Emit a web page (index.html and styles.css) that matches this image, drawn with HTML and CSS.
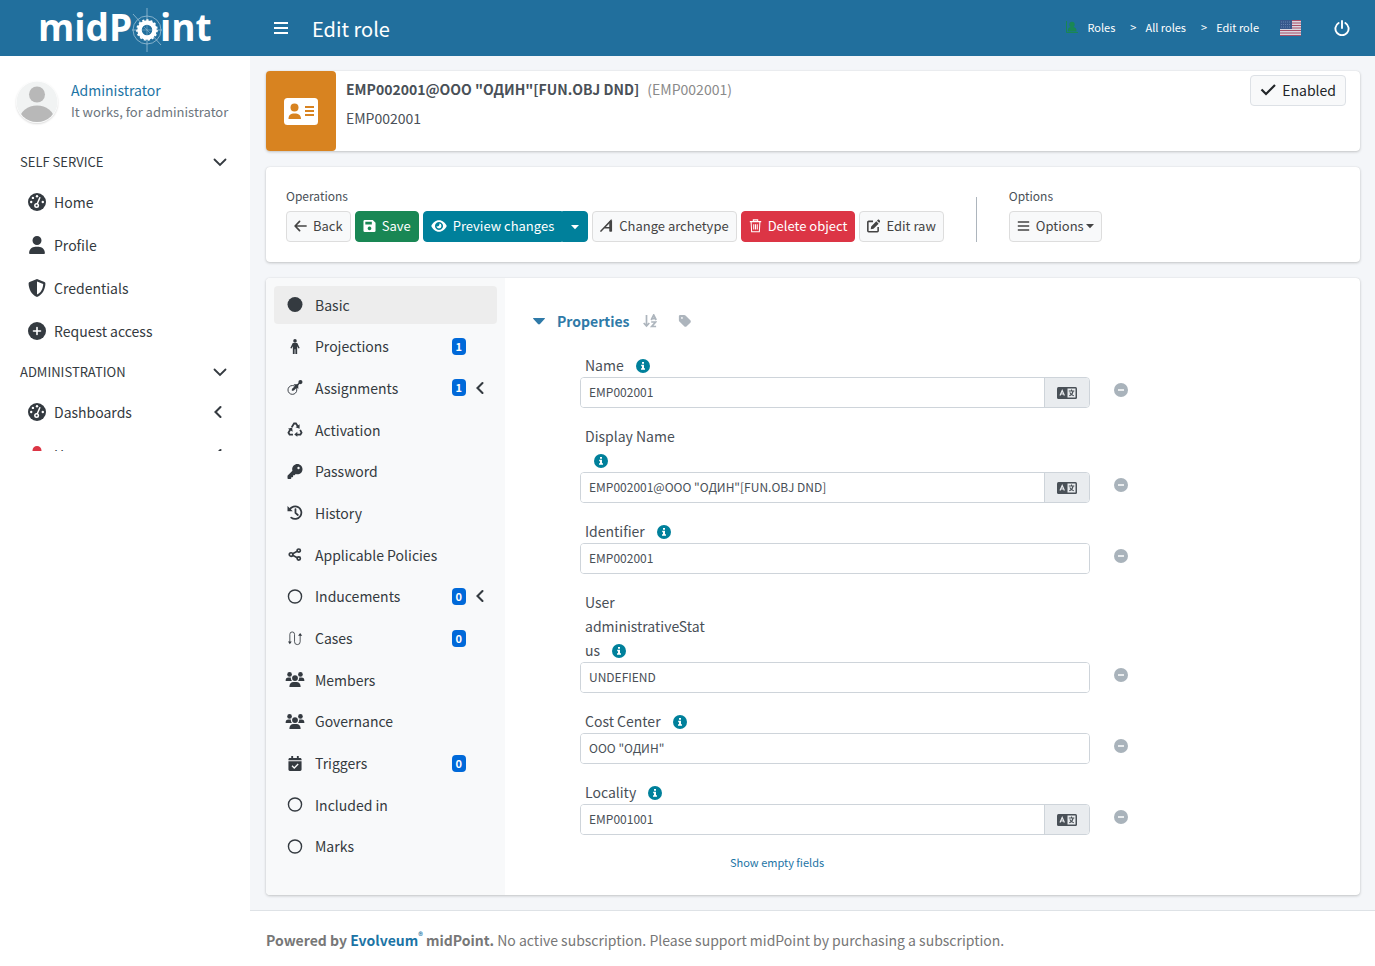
FILE: index.html
```html
<!DOCTYPE html>
<html lang="en">
<head>
<meta charset="utf-8">
<title>Edit role</title>
<link rel="stylesheet" href="styles.css">
</head>
<body>
<svg class="sprite" aria-hidden="true">
  <symbol id="bars" viewBox="0 0 16 16"><path d="M1 3h14M1 8h14M1 13h14" stroke="currentColor" stroke-width="1.8" fill="none"/></symbol>
  <symbol id="gauge" viewBox="0 0 18 18"><circle cx="9" cy="9" r="9"/><g fill="#fff"><circle cx="9" cy="3.2" r="1.2"/><circle cx="4.9" cy="4.9" r="1.2"/><circle cx="3.2" cy="9" r="1.2"/><circle cx="14.8" cy="9" r="1.2"/><circle cx="8.6" cy="12.4" r="2.5"/></g><path d="M8.8 11.8L11.8 4.8" stroke="#fff" stroke-width="1.5" stroke-linecap="round"/><circle cx="8.6" cy="12.4" r="1"/></symbol>
  <symbol id="user" viewBox="0 0 448 512"><path d="M224 256A128 128 0 1 0 224 0a128 128 0 1 0 0 256zm-45.7 48C79.8 304 0 383.8 0 482.3C0 498.700 13.300 512 29.700 512H418.300c16.400 0 29.700-13.300 29.700-29.700C448 383.800 368.200 304 269.700 304H178.300z"/></symbol>
  <symbol id="shield" viewBox="0 0 18 18"><path fill-rule="evenodd" d="M9 0l7.400 3c.6.300 1 .8 1 1.500C17.300 9.500 15 15.500 9 18 3 15.500.700 9.500.600 4.500c0-.7.400-1.200 1-1.500zM9 2.400v13.200c4-2 6-6 6.200-10.700z"/></symbol>
  <symbol id="plus-circle" viewBox="0 0 18 18"><circle cx="9" cy="9" r="9"/><path d="M9 5.500v7M5.500 9h7" stroke="#fff" stroke-width="1.600" stroke-linecap="round"/></symbol>
  <symbol id="chev-down" viewBox="0 0 14 14"><path d="M1.500 4.500L7 10l5.500-5.500" stroke="currentColor" stroke-width="1.800" fill="none" stroke-linecap="round"/></symbol>
  <symbol id="chev-left" viewBox="0 0 14 14"><path d="M9.500 2L4.500 7l5 5" stroke="currentColor" stroke-width="2.100" fill="none" stroke-linecap="round"/></symbol>
  <symbol id="power" viewBox="0 0 16 16"><path d="M4.600 3A6.600 6.600 0 1 0 11.400 3M8 1v7" stroke="currentColor" stroke-width="1.900" fill="none" stroke-linecap="round"/></symbol>
  <symbol id="flag" viewBox="0 0 21 16"><path fill="#d9d6e0" d="M0 0h21v16H0z"/><path d="M0 .5h21M0 3h21M0 5.500h21M0 8h21M0 10.500h21M0 13h21M0 15.500h21" stroke="#a94f68" stroke-width="1.200"/><path fill="#37588c" d="M0 0h12v9H0z"/><path d="M1 2h10M1 4.500h10M1 7h10" stroke="#6583b0" stroke-dasharray="1 1"/></symbol>
  <symbol id="role" viewBox="0 0 12 12"><path d="M.5 0v11.500H12" stroke="currentColor" fill="none"/><circle cx="6" cy="3.500" r="2.700"/><path d="M1.800 10.500c0-3.500 1-4.500 4.200-4.500s4.500 1 4.500 4.500z"/></symbol>
  <symbol id="id-card" viewBox="0 0 34 27"><rect width="34" height="27" rx="3.500" fill="#fff"/><circle cx="10.500" cy="9.500" r="4" /><path d="M4.500 21c0-4 2-5.500 6-5.500s6.500 1.500 6.500 5.500zM21 8h9v2h-9zM21 12h9v2h-9zM21 16h9v2h-9z"/></symbol>
  <symbol id="check" viewBox="0 0 16 16"><path d="M1.500 7.500L6 12l9-9" stroke="currentColor" stroke-width="2.200" fill="none"/></symbol>
  <symbol id="arrow-left" viewBox="0 0 14 14"><path d="M13 7H1.500M6 2L1.200 7 6 12" stroke="currentColor" stroke-width="1.800" fill="none" stroke-linecap="round" stroke-linejoin="round"/></symbol>
  <symbol id="save" viewBox="0 0 14 14"><path fill-rule="evenodd" d="M2 .5h8.500L13.500 3.500V12a1.500 1.500 0 0 1-1.500 1.500H2A1.500 1.500 0 0 1 .5 12V2A1.500 1.500 0 0 1 2 .5zM2.500 2.500v3h7v-3zM7 7.500a2 2 0 1 0 .01 0z"/></symbol>
  <symbol id="eye" viewBox="0 0 18 14"><path fill-rule="evenodd" d="M9 .5c4 0 7 2.800 8.700 6.500C16 10.700 13 13.500 9 13.500S2 10.700.3 7C2 3.300 5 .5 9 .5zM9 2.500a4.500 4.500 0 1 0 .01 0zM9 4.200a2.800 2.800 0 1 1-2.800 2.800A2 2 0 0 0 9 4.200z"/></symbol>
  <symbol id="caret" viewBox="0 0 8 8"><path d="M0 2h8L4 6.300z"/></symbol>
  <symbol id="arch" viewBox="0 0 14 14"><path d="M.5 13L11.500 1.500V13M4.500 8.800h7" stroke="currentColor" stroke-width="1.700" fill="none"/><path d="M10 2.500L13 .5V13h-3z"/></symbol>
  <symbol id="trash" viewBox="0 0 14 16"><path d="M2 3.500l.6 11h8.800l.6-11M.5 3h13M4.500 3V1h5v2M5 6v6M7 6v6M9 6v6" stroke="currentColor" stroke-width="1.200" fill="none"/></symbol>
  <symbol id="edit" viewBox="0 0 14 14"><path d="M6.500 2H1.800a.9.900 0 0 0-.9.900v9.300c0 .5.400.9.900.9h9.300c.5 0 .9-.4.900-.9V8" stroke="currentColor" stroke-width="1.700" fill="none"/><path d="M4.500 7.500L10 2l2.500 2.500L7 10l-3 .5zM10.700 1.300l1-1c.4-.4.900-.4 1.300 0l1 1c.4.400.4.900 0 1.300l-.9 1z"/></symbol>
  <symbol id="disc" viewBox="0 0 16 16"><circle cx="8" cy="8" r="8"/></symbol>
  <symbol id="ring" viewBox="0 0 16 16"><circle cx="8" cy="8" r="7" fill="none" stroke="currentColor" stroke-width="1.500"/></symbol>
  <symbol id="male" viewBox="0 0 16 16"><circle cx="8" cy="2" r="1.900"/><path d="M5.600 4.300h4.800L13 9.500l-1.300.7-1.400-2.500V16H8.400v-5h-.8v5H5.700V7.700L4.300 10.200 3 9.500z"/></symbol>
  <symbol id="assign" viewBox="0 0 16 16"><circle cx="5.200" cy="10.600" r="4.700" fill="none" stroke="currentColor"/><circle cx="13.800" cy="2.200" r="2.200"/><path d="M4.800 11.200L13 3" stroke="currentColor" stroke-width="1.500"/><path d="M6.500 4.500h5V9.700L9.800 8.300 6.500 11.500 4.700 9.700l3.400-3.300z"/></symbol>
  <symbol id="recycle" viewBox="0 0 16 16"><path d="M4.500 5.500L7 1.600h2L11.300 5M13.500 8.500l1.500 3-1.200 1.900H9.500M5.800 13.400H2.200L1 11.500 3 8" stroke="currentColor" stroke-width="1.900" fill="none"/><path d="M12.900 2.500v4.800L8.600 5.500zM10.500 10.300v5.500L7.200 13.200zM.5 7.200l4.400-1.400.6 4.600z"/></symbol>
  <symbol id="key" viewBox="0 0 512 512"><path d="M336 352c97.200 0 176-78.800 176-176S433.200 0 336 0S160 78.800 160 176c0 18.700 2.900 36.800 8.300 53.700L7 391c-4.500 4.500-7 10.600-7 17v80c0 13.300 10.700 24 24 24h80c13.300 0 24-10.700 24-24V448h40c13.300 0 24-10.700 24-24V384h40c6.400 0 12.500-2.500 17-7l33.300-33.300c16.900 5.400 35 8.300 53.700 8.300zM376 96a40 40 0 1 1 0 80 40 40 0 1 1 0-80z"/></symbol>
  <symbol id="history" viewBox="0 0 16 16"><path d="M2.200 5A6.700 6.700 0 1 1 4 13.500M8.500 4.500v4l2.500 2.200" stroke="currentColor" stroke-width="1.900" fill="none" stroke-linecap="round"/><path d="M0 1v5.600h5.600z"/></symbol>
  <symbol id="share" viewBox="0 0 16 16"><g fill="none" stroke="currentColor" stroke-width="1.800"><circle cx="3.800" cy="8" r="1.900"/><circle cx="12" cy="3.800" r="1.700"/><circle cx="12" cy="12.200" r="1.700"/><path d="M5.500 7.200L10.400 4.600M5.500 8.800l4.900 2.600"/></g></symbol>
  <symbol id="route" viewBox="0 0 16 16"><path d="M2.500 12V3.500a2.500 2.500 0 0 1 5 0v8a3 3 0 0 0 6 0V4" stroke="currentColor" stroke-width=".9" fill="none"/><path d="M.5 11.300h4L2.500 14zM11.300 5h4.400L13.500 2z"/></symbol>
  <symbol id="users" viewBox="0 0 20 16"><circle cx="4.200" cy="2.600" r="2.500"/><circle cx="15.800" cy="2.600" r="2.500"/><path d="M0 9.500c0-2.500 1-3.600 3-3.600h2.500A5 5 0 0 0 6.700 9.500zM20 9.500c0-2.500-1-3.600-3-3.600h-2.500A5 5 0 0 1 13.300 9.500z"/><circle cx="10" cy="6.500" r="3.100"/><path d="M4 16c0-3.700 1.800-5.300 4.500-5.300h3c2.700 0 4.500 1.600 4.500 5.300z"/></symbol>
  <symbol id="calendar" viewBox="0 0 16 16"><path d="M1 4.500V3.500C1 2.600 1.700 2 2.500 2H4V0h2v2h4V0h2v2h1.500c.8 0 1.500.600 1.500 1.500v1zM1 5.500h14v9c0 .8-.7 1.500-1.500 1.500h-11C1.700 16 1 15.300 1 14.500z"/><path d="M4.800 10.500l2.400 2.300 4.200-4.300" stroke="#f8f9fa" stroke-width="1.400" fill="none"/></symbol>
  <symbol id="caret-big" viewBox="0 0 12 12"><path d="M.5 3h11a.4.400 0 0 1 .3.700L7 9a1.500 1.500 0 0 1-2 0L.2 3.700a.4.400 0 0 1 .3-.7z"/></symbol>
  <symbol id="sort" viewBox="0 0 14 14"><path d="M3.500 1v10.500M.7 9l2.800 3L6.300 9M8.200 6l2.500-5 2.500 5M9 4.600h3.500M8.200 8h4.400L8.700 12.500h4.400" stroke="currentColor" stroke-width="1.700" fill="none"/></symbol>
  <symbol id="tag" viewBox="0 0 448 512"><path d="M0 80V229.500c0 17 6.700 33.300 18.700 45.300l176 176c25 25 65.500 25 90.500 0L418.700 317.300c25-25 25-65.500 0-90.500l-176-176c-12-12-28.300-18.700-45.300-18.700H48C21.500 32 0 53.500 0 80zm112 32a32 32 0 1 1 0 64 32 32 0 1 1 0-64z"/></symbol>
  <symbol id="info" viewBox="0 0 14 14"><circle cx="7" cy="7" r="7"/><path fill="#fff" d="M6 3h2v1.800H6zM5.200 5.800H8v3.400h1v1.500H5V9.200h1V7.200h-.8z"/></symbol>
  <symbol id="lang" viewBox="0 0 20 12"><rect width="20" height="12" rx="1.500"/><path d="M3 8.500L5.200 3.500l2.200 5M3.800 7h2.800" stroke="#e9ecef" stroke-width="1.200" fill="none"/><path fill="#e9ecef" d="M10.500 1.500H18.500v9h-8z"/><path d="M11.800 4h5.500M14.500 2.600V4M12.300 8.800c2.200-.9 3.400-2.400 3.700-4.500M12.800 5.500c.8 1.600 2 2.700 4 3.300" stroke="currentColor" stroke-width="1.100" fill="none"/></symbol>
  <symbol id="minus-circle" viewBox="0 0 14 14"><circle cx="7" cy="7" r="7"/><path d="M4 7h6" stroke="#fff" stroke-width="1.500"/></symbol>
</svg>
<header class="topbar">
  <a class="brand" href="#" aria-label="midPoint">
    <svg class="logo" viewBox="0 0 210 56">
      <g fill="none" stroke="#9cc0d6" stroke-width=".8"><circle cx="127" cy="30" r="14"/><path d="M127 8v44M112 30h30M113 14l28 31" /></g>
      <text x="18" y="41">midP</text><text x="140" y="41">int</text>
      <circle cx="127" cy="30" r="7.500" fill="#216f9d" stroke="#fff" stroke-width="4.500"/>
      <circle cx="127" cy="30" r="10" fill="none" stroke="#fff" stroke-width="1.600" stroke-dasharray="2.100 2.100"/>
      <path d="M127 25v10M122 30h10M124 27l6 6" stroke="#9cc0d6" stroke-width=".5"/>
    </svg>
  </a>
  <div class="topbar-main">
    <button class="plain toggle" aria-label="Toggle menu"><svg class="i16"><use href="#bars"/></svg></button>
    <h1>Edit role</h1>
    <nav class="crumbs" aria-label="Breadcrumb">
      <svg class="i12 green"><use href="#role"/></svg>
      <a href="#">Roles</a><span>&gt;</span><a href="#">All roles</a><span>&gt;</span><a href="#">Edit role</a>
    </nav>
    <button class="plain" aria-label="Language"><svg class="flag"><use href="#flag"/></svg></button>
    <button class="plain power" aria-label="Log out"><svg class="i16"><use href="#power"/></svg></button>
  </div>
</header>
<div class="shell">
  <aside class="sidebar">
    <div class="account">
      <svg class="avatar" viewBox="0 0 42 42"><defs><clipPath id="round"><circle cx="21" cy="21" r="20"/></clipPath></defs><circle cx="21" cy="21" r="20.500" fill="#f1f3f3"/><g clip-path="url(#round)" fill="#b8b8b8"><circle cx="21" cy="13.500" r="8"/><ellipse cx="21" cy="38" rx="17" ry="13.500"/></g></svg>
      <div><a href="#">Administrator</a><p>It works, for administrator</p></div>
    </div>
    <nav class="menu">
      <h2>SELF SERVICE <svg class="i14"><use href="#chev-down"/></svg></h2>
      <a href="#"><svg class="i18"><use href="#gauge"/></svg>Home</a>
      <a href="#"><svg class="i18"><use href="#user"/></svg>Profile</a>
      <a href="#"><svg class="i18"><use href="#shield"/></svg>Credentials</a>
      <a href="#"><svg class="i18"><use href="#plus-circle"/></svg>Request access</a>
      <h2>ADMINISTRATION <svg class="i14"><use href="#chev-down"/></svg></h2>
      <a href="#"><svg class="i18"><use href="#gauge"/></svg>Dashboards<svg class="i14 end"><use href="#chev-left"/></svg></a>
      <a href="#"><svg class="i18 red"><use href="#user"/></svg>Users<svg class="i14 end"><use href="#chev-left"/></svg></a>
    </nav>
  </aside>
  <div class="page">
    <main class="content">
      <section class="card summary">
        <div class="tile"><svg><use href="#id-card"/></svg></div>
        <div class="titles">
          <p><strong>EMP002001@ООО "ОДИН"[FUN.OBJ DND]</strong> <span>(EMP002001)</span></p>
          <p>EMP002001</p>
        </div>
        <button class="btn status"><svg class="i16"><use href="#check"/></svg>Enabled</button>
      </section>
      <section class="card operations">
        <div>
          <p>Operations</p>
          <div class="buttons">
            <button class="btn"><svg class="i13"><use href="#arrow-left"/></svg>Back</button>
            <button class="btn success"><svg class="i13"><use href="#save"/></svg>Save</button>
            <div class="split"><button class="btn info"><svg class="eye"><use href="#eye"/></svg>Preview changes</button><button class="btn info" aria-label="More preview actions"><svg class="i8"><use href="#caret"/></svg></button></div>
            <button class="btn"><svg class="i13"><use href="#arch"/></svg>Change archetype</button>
            <button class="btn danger"><svg class="i13"><use href="#trash"/></svg>Delete object</button>
            <button class="btn"><svg class="i13"><use href="#edit"/></svg>Edit raw</button>
          </div>
        </div>
        <div class="options">
          <p>Options</p>
          <button class="btn"><svg class="i13"><use href="#bars"/></svg>Options<svg class="i8 drop"><use href="#caret"/></svg></button>
        </div>
      </section>
      <section class="card details">
        <nav class="tabs">
          <a class="active" href="#"><svg><use href="#disc"/></svg>Basic</a>
          <a href="#"><svg><use href="#male"/></svg>Projections<b>1</b></a>
          <a href="#"><svg><use href="#assign"/></svg>Assignments<b>1</b><svg class="more"><use href="#chev-left"/></svg></a>
          <a href="#"><svg><use href="#recycle"/></svg>Activation</a>
          <a href="#"><svg><use href="#key"/></svg>Password</a>
          <a href="#"><svg><use href="#history"/></svg>History</a>
          <a href="#"><svg><use href="#share"/></svg>Applicable Policies</a>
          <a href="#"><svg><use href="#ring"/></svg>Inducements<b>0</b><svg class="more"><use href="#chev-left"/></svg></a>
          <a href="#"><svg><use href="#route"/></svg>Cases<b>0</b></a>
          <a href="#"><svg><use href="#users"/></svg>Members</a>
          <a href="#"><svg><use href="#users"/></svg>Governance</a>
          <a href="#"><svg><use href="#calendar"/></svg>Triggers<b>0</b></a>
          <a href="#"><svg><use href="#ring"/></svg>Included in</a>
          <a href="#"><svg><use href="#ring"/></svg>Marks</a>
        </nav>
        <form class="panel">
          <div class="panel-head">
            <button type="button" class="plain heading"><svg class="i12"><use href="#caret-big"/></svg>Properties</button>
            <button type="button" class="plain" aria-label="Sort"><svg class="i14"><use href="#sort"/></svg></button>
            <button type="button" class="plain" aria-label="Tags"><svg class="i14"><use href="#tag"/></svg></button>
          </div>
          <div class="field">
            <label for="name">Name <svg class="hint"><use href="#info"/></svg></label>
            <div class="control"><input id="name" type="text" value="EMP002001"><button type="button" class="lang" aria-label="Translate"><svg><use href="#lang"/></svg></button></div>
            <button type="button" class="plain remove" aria-label="Remove"><svg class="i14"><use href="#minus-circle"/></svg></button>
          </div>
          <div class="field">
            <label for="display">Display Name <svg class="hint"><use href="#info"/></svg></label>
            <div class="control"><input id="display" type="text" value="EMP002001@ООО &quot;ОДИН&quot;[FUN.OBJ DND]"><button type="button" class="lang" aria-label="Translate"><svg><use href="#lang"/></svg></button></div>
            <button type="button" class="plain remove" aria-label="Remove"><svg class="i14"><use href="#minus-circle"/></svg></button>
          </div>
          <div class="field">
            <label for="ident">Identifier <svg class="hint"><use href="#info"/></svg></label>
            <div class="control"><input id="ident" type="text" value="EMP002001"></div>
            <button type="button" class="plain remove" aria-label="Remove"><svg class="i14"><use href="#minus-circle"/></svg></button>
          </div>
          <div class="field">
            <label for="admin">User administrativeStatus <svg class="hint"><use href="#info"/></svg></label>
            <div class="control"><input id="admin" type="text" value="UNDEFIEND"></div>
            <button type="button" class="plain remove" aria-label="Remove"><svg class="i14"><use href="#minus-circle"/></svg></button>
          </div>
          <div class="field">
            <label for="cost">Cost Center <svg class="hint"><use href="#info"/></svg></label>
            <div class="control"><input id="cost" type="text" value="ООО &quot;ОДИН&quot;"></div>
            <button type="button" class="plain remove" aria-label="Remove"><svg class="i14"><use href="#minus-circle"/></svg></button>
          </div>
          <div class="field">
            <label for="locality">Locality <svg class="hint"><use href="#info"/></svg></label>
            <div class="control"><input id="locality" type="text" value="EMP001001"><button type="button" class="lang" aria-label="Translate"><svg><use href="#lang"/></svg></button></div>
            <button type="button" class="plain remove" aria-label="Remove"><svg class="i14"><use href="#minus-circle"/></svg></button>
          </div>
          <a class="show-empty" href="#">Show empty fields</a>
        </form>
      </section>
    </main>
    <footer><strong>Powered by <a href="#">Evolveum<sup>®</sup></a> midPoint.</strong> No active subscription. Please support midPoint by purchasing a subscription.</footer>
  </div>
</div>
</body>
</html>
```
FILE: styles.css
```css
* { box-sizing: border-box; }
body {
  margin: 0;
  min-height: 100vh;
  display: flex;
  flex-direction: column;
  background: #f4f6f9;
  color: #495057;
  font: 14px/24px "Noto Sans CJK SC", "Noto Sans", sans-serif;
}
h1, h2, p { margin: 0; font-weight: 400; }
a { color: #1c74a5; text-decoration: none; }
svg { fill: currentColor; flex: none; }
button, input { font: inherit; color: inherit; }
.sprite { display: none; }
.plain { display: flex; padding: 0; border: 0; background: none; cursor: pointer; }
.i8 { width: 8px; height: 8px; }
.i12 { width: 12px; height: 12px; }
.i13 { width: 13px; height: 14px; }
.i14 { width: 14px; height: 14px; }
.i16 { width: 16px; height: 16px; }
.i18 { width: 18px; height: 18px; }
.red { color: #dc3545; }
.green { color: #198754; }

.topbar { display: flex; height: 56px; background: #216f9d; color: #fff; }
.brand { width: 250px; padding-left: 20px; }
.logo { display: block; width: 210px; height: 56px; font: 700 37px "Open Sans", sans-serif; fill: #fff; }
.topbar-main { flex: 1; display: flex; align-items: center; padding: 0 25px 0 23px; }
.topbar h1 { margin-left: 23px; padding-top: 2px; font-size: 20px; line-height: 30px; }
.crumbs { display: flex; align-items: center; margin: 0 21px 3px auto; font-size: 11px; }
.crumbs a { color: #fff; }
.crumbs svg { margin-right: 9px; }
.crumbs span { margin: 0 9px 0 15px; }
.flag { width: 21px; height: 16px; }
.power { margin-left: 33px; }

.shell { flex: 1; display: flex; }
.sidebar { width: 250px; background: #fff; color: #343a40; }
.account { display: flex; gap: 13px; height: 87px; padding: 23px 16px 0; }
.account > div { line-height: 22px; }
.account p { font-size: 13px; color: #6c757d; white-space: nowrap; }
.avatar { width: 42px; height: 42px; margin-top: 2px; border-radius: 50%; box-shadow: 0 1px 2px rgba(0, 0, 0, .15); }
.menu { max-height: 308px; padding: 0 21px 0 20px; overflow: hidden; }
.menu h2 { display: flex; align-items: center; justify-content: space-between; height: 38px; padding-right: 2px; font-size: 13px; }
.menu a { display: flex; align-items: center; gap: 8px; height: 43px; padding: 0 4px 2px 8px; color: inherit; }
.end { margin-left: auto; }

.page { flex: 1; min-width: 0; display: flex; flex-direction: column; }
.content { flex: 1; display: flex; flex-direction: column; gap: 16px; padding: 15px 15px 15px 16px; }
.card { display: flex; background: #fff; border-radius: 4px; box-shadow: 0 0 1px rgba(0, 0, 0, .125), 0 1px 3px rgba(0, 0, 0, .2); }
.btn {
  display: flex;
  align-items: center;
  gap: 6px;
  height: 31px;
  padding: 0 7px 1px;
  border: 1px solid #ddd;
  border-radius: 4px;
  background: #f8f9fa;
  color: #444;
  font-size: 13px;
  white-space: nowrap;
  cursor: pointer;
}
.summary { align-items: flex-start; min-height: 80px; padding-right: 14px; }
.tile { display: grid; place-items: center; align-self: stretch; width: 70px; border-radius: 4px; background: #d88320; color: #d88320; }
.tile svg { width: 34px; height: 27px; }
.titles { flex: 1; display: grid; gap: 5px; padding: 6px 10px; }
.titles span { margin-left: 5px; color: #8a8a8a; }
.status { margin-top: 4px; padding: 0 9px 2px; color: #212529; font-size: 14px; border-color: #dde1e6; }
.operations { padding: 19px 20px 20px; }
.operations p { font-size: 12px; line-height: 20px; margin-bottom: 5px; }
.buttons { display: flex; gap: 4px; }
.success { background: #198754; border-color: #198754; color: #fff; }
.info { background: #00809b; border-color: #00809b; color: #fff; }
.danger { background: #dc3545; border-color: #dc3545; color: #fff; }
.eye { width: 16px; height: 14px; }
.split { display: flex; }
.split .btn:first-child { border-radius: 4px 0 0 4px; }
.split .btn:last-child { padding: 0 8px; border-radius: 0 4px 4px 0; }
.options { position: relative; margin-left: 32px; padding-left: 33px; }
.options::before { content: ""; position: absolute; left: 0; top: 11px; bottom: 0; width: 1px; background: #adb5bd; }
.drop { margin-left: -4px; }

.details { align-items: stretch; }
.tabs { display: flex; flex-direction: column; justify-content: space-between; width: 239px; padding: 8px 8px 29px; border-radius: 4px 0 0 4px; background: #f8f9fa; }
.tabs a { display: flex; align-items: center; height: 38px; padding: 0 11px 1px; border-radius: 4px; color: #343a40; }
.tabs a > svg:first-child { width: 20px; height: 15px; margin-right: 10px; }
.tabs .active { background: #ededed; }
.tabs b { margin-left: auto; margin-right: 20px; padding: 0 4px; border-radius: 4px; background: #0069d9; color: #fff; font-size: 11px; line-height: 17px; }
.tabs .more { width: 14px; height: 14px; margin: 0 -1px 0 -13px; }
.panel { flex: 1; padding: 31px 28px 22px; }
.panel-head { display: flex; align-items: center; gap: 21px; margin-bottom: 20px; color: #adb5bd; }
.heading { align-items: center; gap: 12px; margin-right: -8px; color: #2f7aa8; font-weight: 700; }
.field { display: grid; grid-template-columns: minmax(0, 510px) 14px; column-gap: 24px; margin: 0 0 16px 47px; }
.field label { grid-column: 1 / -1; width: 127px; padding-left: 5px; overflow-wrap: anywhere; }
.hint { display: inline-block; width: 23px; height: 14px; margin: 0 9px 0 0; padding-left: 9px; vertical-align: -2px; color: #00809b; }
.control { display: flex; height: 31px; border: 1px solid #ced4da; border-radius: 4px; overflow: hidden; }
.control input { flex: 1; min-width: 0; padding: 0 8px 2px; border: 0; outline: 0; background: #fff; font-size: 12px; }
.lang { width: 45px; display: grid; place-items: center; padding: 0; border: 0; border-left: 1px solid #ced4da; background: #e9ecef; }
.lang svg { width: 20px; height: 12px; }
.remove { align-self: center; margin-bottom: 6px; color: #a9b3bb; }
.show-empty { display: block; width: 92px; margin: 13px 0 0 197px; font-size: 11px; line-height: 22px; white-space: nowrap; }
footer { padding: 17px 16px 16px; border-top: 1px solid #dee2e6; background: #fff; color: #777; }
sup { font-size: 9px; line-height: 0; }
```
